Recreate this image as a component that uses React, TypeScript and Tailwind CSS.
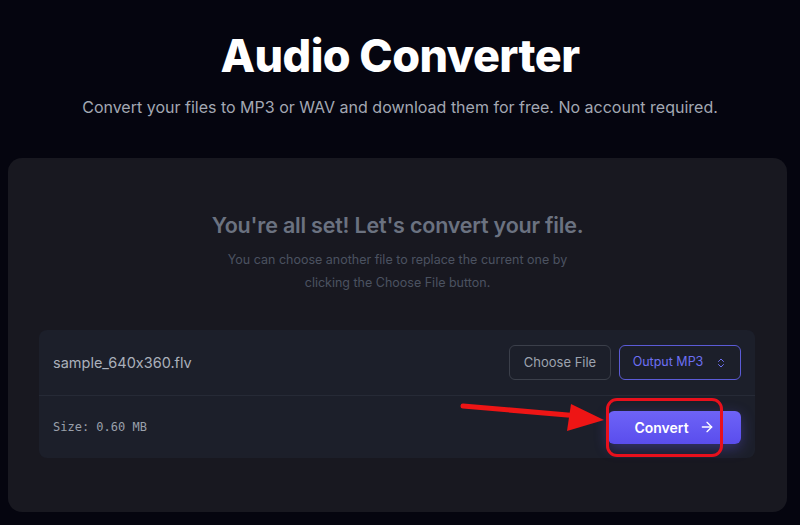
import { ArrowRight, ChevronsUpDown } from 'lucide-react';

export default function App() {
  return (
    <div
      className="w-[800px] h-[525px] bg-[#05050f] overflow-hidden [font-feature-settings:'calt'_0]"
      style={{ fontFamily: 'Inter, "Noto Sans", sans-serif' }}
    >
      <header className="flex flex-col items-center pt-[29px]">
        <h1 className="text-[45px] leading-[54px] font-extrabold text-white tracking-[-0.6px]">Audio Converter</h1>
        <p className="mt-[12px] text-[16px] leading-[24px] text-[#a3a8b3]">
          Convert your files to MP3 or WAV and download them for free. No account required.
        </p>
      </header>

      <main className="mt-[39px] ml-[8px] w-[779px] h-[354px] rounded-[14px] bg-[#181820] px-[31px] pt-[53px]">
        <div className="flex flex-col items-center text-center">
          <h2 className="text-[21.5px] leading-[28px] font-semibold text-[#6b7280] tracking-[-0.2px]">
            You're all set! Let's convert your file.
          </h2>
          <p className="mt-[9px] w-[360px] text-[12.5px] leading-[23px] text-[#4b5260]">
            You can choose another file to replace the current one by clicking the Choose File button.
          </p>
        </div>

        <div className="relative mt-[36px] w-[716px] rounded-[8px] bg-[#1c1f2a]">
          <div className="flex items-center justify-between h-[66px] px-[14px] border-b border-[#262a36]">
            <span className="text-[14.5px] text-[#aab0bb]">sample_640x360.flv</span>
            <div className="flex gap-[8px]">
              <button className="h-[35px] w-[102px] rounded-[6px] border border-[#3b3f4a] text-[13px] text-[#9ca3af]">
                Choose File
              </button>
              <button className="h-[35px] w-[122px] rounded-[6px] border border-[#5b5bd6] text-[12.5px] text-[#6d6ff2] flex items-center justify-center gap-[12px]">
                Output MP3
                <ChevronsUpDown className="w-[12px] h-[12px]" strokeWidth={2} />
              </button>
            </div>
          </div>
          <div className="flex items-center justify-between h-[62px] px-[14px]">
            <span className="text-[12px] text-[#9aa0ab]" style={{ fontFamily: '"DejaVu Sans Mono", "Liberation Mono", monospace' }}>
              Size: 0.60 MB
            </span>
            <button className="h-[33px] w-[133px] rounded-[6px] bg-gradient-to-b from-[#6e63f7] to-[#5a4ded] text-[14px] font-semibold text-white flex items-center justify-center gap-[10px] shadow-[0_4px_14px_rgba(99,88,245,0.35)]">
              Convert
              <ArrowRight className="w-[16px] h-[16px]" strokeWidth={2} />
            </button>
          </div>

          {/* annotation overlay */}
          <div className="absolute left-[567px] top-[68px] w-[117px] h-[59px] rounded-[11px] border-[3px] border-[#e8101c]" />
          <svg className="absolute left-[420px] top-[70px]" width="190" height="40" viewBox="0 0 190 40">
            <line x1="4" y1="6" x2="120" y2="16" stroke="#ee1515" strokeWidth="5" strokeLinecap="round" />
            <polygon points="112,4 145,20 108,31" fill="#ee1515" />
          </svg>
        </div>
      </main>
    </div>
  );
}
